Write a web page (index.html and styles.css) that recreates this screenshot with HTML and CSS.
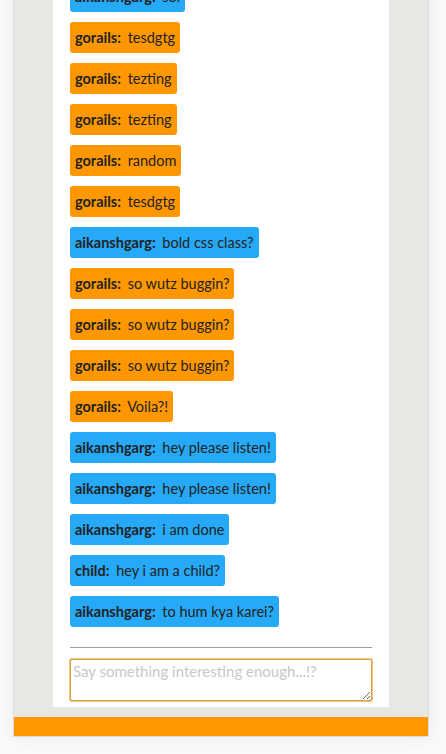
FILE: index.html
```html
<!DOCTYPE html>
<html>
<head>
<meta charset="utf-8">
<title>Chat</title>
<link rel="stylesheet" href="styles.css">
</head>
<body>
<div class="frame">
  <div class="panel">
    <div class="column">
      <div class="messages">
        <div class="msg blue"><b class="name">aikanshgarg:</b> sol</div>
        <div class="msg orange"><b class="name">gorails:</b> tesdgtg</div>
        <div class="msg orange"><b class="name">gorails:</b> tezting</div>
        <div class="msg orange"><b class="name">gorails:</b> tezting</div>
        <div class="msg orange"><b class="name">gorails:</b> random</div>
        <div class="msg orange"><b class="name">gorails:</b> tesdgtg</div>
        <div class="msg blue"><b class="name">aikanshgarg:</b> bold css class?</div>
        <div class="msg orange"><b class="name">gorails:</b> so wutz buggin?</div>
        <div class="msg orange"><b class="name">gorails:</b> so wutz buggin?</div>
        <div class="msg orange"><b class="name">gorails:</b> so wutz buggin?</div>
        <div class="msg orange"><b class="name">gorails:</b> Voila?!</div>
        <div class="msg blue"><b class="name">aikanshgarg:</b> hey please listen!</div>
        <div class="msg blue"><b class="name">aikanshgarg:</b> hey please listen!</div>
        <div class="msg blue"><b class="name">aikanshgarg:</b> i am done</div>
        <div class="msg blue"><b class="name">child:</b> hey i am a child?</div>
        <div class="msg blue"><b class="name">aikanshgarg:</b> to hum kya karei?</div>
      </div>
      <hr class="divider">
      <textarea class="input" placeholder="Say something interesting enough...!?" autofocus></textarea>
    </div>
  </div>
  <div class="footer"></div>
</div>
</body>
</html>
```
FILE: styles.css
```css
html, body {
  margin: 0;
  padding: 0;
  background: #fafafa;
  font-family: Lato, "Open Sans", sans-serif;
  font-size: 14.5px;
  color: #222;
}
.frame {
  margin: 0 0 17px 13px;
  width: 414px;
  border: 1px solid #dcdcdc;
  border-top: 0;
  background: #e9e7e3;
  box-shadow: 0 0 18px rgba(0, 0, 0, 0.07);
}
.panel {
  padding: 0 39px 10px;
}
.column {
  background: #fff;
  padding: 0 17px 6px;
}
.messages {
  display: flex;
  flex-direction: column;
  align-items: flex-start;
  gap: 10px;
  margin-top: -19px;
}
.msg {
  height: 31px;
  line-height: 31px;
  padding: 0 5px;
  border-radius: 3px;
  white-space: pre;
}
.name {
  font-weight: 700;
  margin-right: 3px;
}
.orange { background: #ff9800; }
.blue { background: #26a9f6; }
.divider {
  border: 0;
  border-top: 1px solid #9e9e9e;
  height: 0;
  margin: 20px 0 11px;
}
.input {
  display: block;
  box-sizing: border-box;
  width: 302px;
  height: 42px;
  margin: 0;
  padding: 2px 2px;
  border: 1px solid #d6a04a;
  border-radius: 2px;
  box-shadow: 0 0 0 1px #f0c47a;
  font-family: Lato, "Open Sans", sans-serif;
  font-size: 15px;
  color: #222;
  resize: vertical;
  outline: none;
}
.input::placeholder {
  color: #c8c8c8;
}
.footer {
  height: 19px;
  background: #ff9800;
}
```
